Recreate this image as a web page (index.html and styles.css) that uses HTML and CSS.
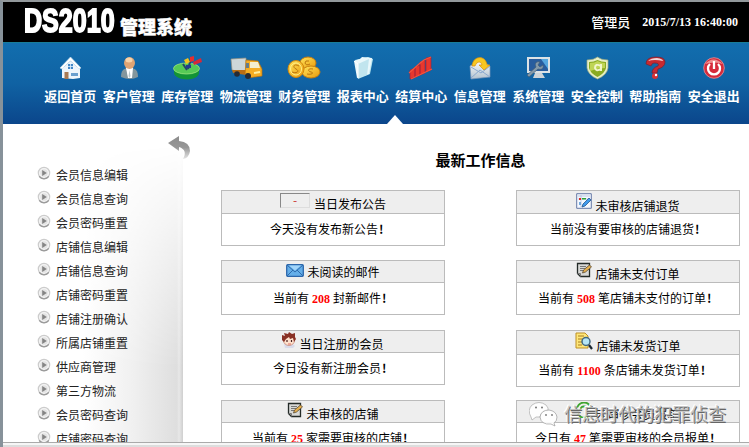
FILE: index.html
```
<!DOCTYPE html>
<html lang="zh-CN">
<head>
<meta charset="utf-8">
<title>DS2010 管理系统</title>
<link rel="stylesheet" href="styles.css">
</head>
<body>
<svg width="0" height="0" class="defs">
  <defs>
    <linearGradient id="gold" x1="0" y1="0" x2="1" y2="1"><stop offset="0" stop-color="#ffe45c"/><stop offset="1" stop-color="#e99a0c"/></linearGradient>
    <linearGradient id="silver" x1="0" y1="0" x2="0" y2="1"><stop offset="0" stop-color="#fff"/><stop offset="1" stop-color="#b4c3cf"/></linearGradient>
    <linearGradient id="arrow" x1="0" y1="0" x2="0" y2="1"><stop offset="0" stop-color="#8c8c8c"/><stop offset=".5" stop-color="#979797"/><stop offset="1" stop-color="#e4e4e4"/></linearGradient>
    <symbol id="play" viewBox="0 0 14 14"><circle cx="7" cy="7" r="5.7" fill="#f4f4f4" stroke="#ccc" stroke-width="1.2"/><path d="M2.2 10.4a6 6 0 0 0 9.6 0" fill="none" stroke="#999" stroke-width="1.3"/><circle cx="7" cy="7" r="3.7" fill="#e3e3e3"/><path d="M5.2 4l4.6 3-4.6 3z" fill="#858585"/></symbol>
    <symbol id="note" viewBox="0 0 16 16"><path d="M1.5 1.5h12v13h-9l-3-3z" fill="#d8d9d6" stroke="#242b28" stroke-width="1.3"/><path d="M1.5 11.5h3v3M4 4.5h6M4 6.5h5M4 8.5h4" fill="none" stroke="#777" stroke-width="1"/><path d="M6.5 11l1-3 6-5 2 2-6 5z" fill="#e4ae4b" stroke="#594a35" stroke-width=".8"/></symbol>
  </defs>
</svg>
<div class="window">
  <header class="top">
    <div class="brand"><span class="brand-code">DS2010</span><span class="brand-name">管理系统</span></div>
    <div class="user"><span class="user-name">管理员</span><span class="clock">2015/7/13 16:40:00</span></div>
  </header>
  <nav class="nav">
    <a class="nav-item"><svg viewBox="0 0 34 24"><path d="M9 11h18v11l-7 1-11-1z" fill="#eef5fb"/><path d="M7 12L17.500 1 28 12l-2 1-8.500-8L9 13z" fill="#fff" stroke="#b9d5e8" stroke-width=".7"/><path d="M9 13l8.500-8L26 13z" fill="#eef5fb"/><path d="M15 8h5v5h-5z" fill="#4388c7"/><path d="M17.500 8v5M15 10.500h5" stroke="#dcefff" stroke-width=".8"/><path d="M11.500 16h4v7h-4z" fill="#a87a53"/><path d="M18 17h7v3h-7z" fill="#6a9fce"/></svg>返回首页</a>
    <a class="nav-item"><svg viewBox="0 0 34 24"><path d="M9 21c0-6 2-9 8.500-9s8.500 3 8.500 9q-8 4-17 0z" fill="#83969d"/><path d="M14 12h7l-1 10h-4z" fill="#fff"/><path d="M17.500 14l1 6-1 2-1-2z" fill="#b9c7cc"/><ellipse cx="17.500" cy="7" rx="5.500" ry="6" fill="#dfa474"/><ellipse cx="17" cy="4" rx="3.500" ry="2.500" fill="#f8d3a8"/></svg>客户管理</a>
    <a class="nav-item"><svg viewBox="0 0 34 24"><path d="M4 13v4c1 8 24 9 25 0v-5z" fill="#129336"/><ellipse cx="16.500" cy="12.500" rx="13" ry="5.500" fill="#56ca56" stroke="#abeb85" stroke-width=".7"/><path d="M17 14L13 8M18 13l3-10" stroke="#25456b" stroke-width="2"/><path d="M14 4l4-2 2 4-4 2z" fill="#f3c31e"/><path d="M20 1l4-1v5l-4 1z" fill="#e52e30"/><path d="M23 6l8-4 1 4-8 3z" fill="#d72938"/><path d="M16 9h5v3h-5z" fill="#243b8d"/></svg>库存管理</a>
    <a class="nav-item"><svg viewBox="0 0 34 24"><path d="M2 3l15-1v15L3 14z" fill="#cdd7d9" stroke="#948f80" stroke-width=".7"/><path d="M3 14h14v5l-13-2z" fill="#b86d16"/><path d="M17 4l12 1 4 8v7l-14 2-3-3z" fill="#f5ad23" stroke="#b67011" stroke-width=".7"/><path d="M21 6h8l2 6H21z" fill="#f5efce"/><path d="M17 7h3v5h-3z" fill="#657c89"/><circle cx="8" cy="18" r="2.800" fill="#272b34"/><circle cx="19" cy="20" r="3" fill="#272b34"/><path d="M25 17l6-1" stroke="#fff0a0" stroke-width="2"/></svg>物流管理</a>
    <a class="nav-item"><svg viewBox="0 0 34 24"><ellipse cx="21" cy="7" rx="8" ry="6" fill="url(#gold)" stroke="#c87d0d"/><ellipse cx="24" cy="16" rx="9" ry="6" fill="url(#gold)" stroke="#c87d0d"/><ellipse cx="9" cy="13" rx="8" ry="8.500" fill="url(#gold)" stroke="#d1860c"/><ellipse cx="9" cy="13" rx="5.500" ry="6" fill="none" stroke="#fff08a"/><path d="M12 10c-5-3-7 1-3 3s1 5-4 3M26 13c-5-1-6 2-2 3s0 3-4 2M22 5q-4-1-4 2 1 3 5 1" fill="none" stroke="#bb760e" stroke-width="1"/></svg>财务管理</a>
    <a class="nav-item"><svg viewBox="0 0 34 24"><path d="M9 4l13-3 5 2-3 15-12 5z" fill="#b8e5ef"/><path d="M8 5l6-2 2-2 10 1-3 16-12 4z" fill="#eaf8fb"/><path d="M12 8l11-5-2 16-9 3z" fill="#c1e5ee"/><path d="M8 5l4 3v14" fill="none" stroke="#fff"/></svg>报表中心</a>
    <a class="nav-item"><svg viewBox="0 0 34 24"><path d="M6 14l5-2v9l-5 2zM11 11l5-2v10l-5 2zM16 6l5-2v13l-5 2zM22 2l5-1v13l-5 2z" fill="#e8372d" stroke="#a2243a" stroke-width=".7"/><path d="M5 17L15 8l5-4 7-3M7 23l21-10" fill="none" stroke="#f2553f" stroke-width="1.100"/></svg>结算中心</a>
    <a class="nav-item"><svg viewBox="0 0 34 24"><path d="M7 10l11-6 9 6v11l-19 2z" fill="url(#silver)" stroke="#7995b9" stroke-width=".7"/><path d="M8 22l9-8 10 7M8 11l10 6 9-7" fill="none" stroke="#8aa9cf"/><path d="M9 10c1-11 14-11 15-1h3l-6 5-5-5h3c-1-4-5-4-7 1z" fill="#f8c721" stroke="#d58e0e" stroke-width=".7"/></svg>信息管理</a>
    <a class="nav-item"><svg viewBox="0 0 34 24"><path d="M6 1h23v16H6z" fill="#dce3e6"/><path d="M8 3h19v12H8z" fill="#285d9e"/><path d="M20 3h7v10z" fill="#55a7df"/><path d="M14 17h7l3 5H12z" fill="#cdd4d8"/><path d="M6 19L15 11c-2-4 1-6 4-5l-2 3 2 2 3-2c1 4-2 5-5 4L8 21z" fill="#849aaa" stroke="#425d75" stroke-width=".7"/></svg>系统管理</a>
    <a class="nav-item"><svg viewBox="0 0 34 24"><path d="M7 4q7 0 10.500-3Q21 4 28 4v8q-1 7-10.500 11Q8 19 7 12z" fill="#e7efc5" stroke="#9eac82" stroke-width=".7"/><path d="M9 6q5 0 8.500-2Q21 6 26 6v6q-1 5-8.500 9Q10 17 9 12z" fill="#8aab22"/><path d="M10 7q5 0 7.500-2Q21 7 25 7v5q-7 0-15 3z" fill="#bfd555"/><path d="M21 8v7M21 10q-6-3-6 2 1 4 6 1" fill="none" stroke="#f1f6cb" stroke-width="2"/></svg>安全控制</a>
    <a class="nav-item"><svg viewBox="0 0 34 24"><path d="M8 8Q8 1 18 1q9 0 9 5 0 5-7 7l-1 4h-5q0-5 6-7 2-3-4-3-2 0-3 3z" fill="#c82a31" stroke="#7b1e2d" stroke-width=".7"/><path d="M10 5q3-3 9-3 6 1 6 3-4-1-8-1-4 0-7 1z" fill="#efd4d7"/><circle cx="17" cy="20" r="3" fill="#d63135"/><circle cx="18" cy="19" r="1.200" fill="#fff"/></svg>帮助指南</a>
    <a class="nav-item"><svg viewBox="0 0 34 24"><circle cx="17" cy="12" r="10.300" fill="#d62b3b" stroke="#eb8f95" stroke-width=".8"/><path d="M8 8q8-9 18 0-8-3-18 0z" fill="#ef8e90"/><path d="M13 8a6 6 0 1 0 8 0M17 5v8" fill="none" stroke="#fff" stroke-width="2.300"/></svg>安全退出</a>
    <i class="pointer"></i>
  </nav>
  <div class="main">
    <aside class="side">
      <svg class="back" viewBox="0 0 23 23"><path d="M0 7L11 0v5q11 1 11 10-1 7-7 8 5-9-4-12v4z" fill="url(#arrow)"/></svg>
      <ul class="menu">
        <li><svg><use href="#play"/></svg>会员信息编辑</li>
        <li><svg><use href="#play"/></svg>会员信息查询</li>
        <li><svg><use href="#play"/></svg>会员密码重置</li>
        <li><svg><use href="#play"/></svg>店铺信息编辑</li>
        <li><svg><use href="#play"/></svg>店铺信息查询</li>
        <li><svg><use href="#play"/></svg>店铺密码重置</li>
        <li><svg><use href="#play"/></svg>店铺注册确认</li>
        <li><svg><use href="#play"/></svg>所属店铺重置</li>
        <li><svg><use href="#play"/></svg>供应商管理</li>
        <li><svg><use href="#play"/></svg>第三方物流</li>
        <li><svg><use href="#play"/></svg>会员密码查询</li>
        <li><svg><use href="#play"/></svg>店铺密码查询</li>
      </ul>
    </aside>
    <section class="content">
      <h1>最新工作信息</h1>
      <div class="cards">
        <article class="card notice">
          <h2><span class="broken">-</span><span>当日发布公告</span></h2>
          <p>今天没有发布新公告<b class="bang">!</b></p>
        </article>
        <article class="card returns">
          <h2><svg width="16" height="16" viewBox="0 0 16 16"><path d="M.7.7h14.600v14.600H.7z" fill="#f4f8ff" stroke="#6679a6"/><path d="M2 3h12M2 6h12M5 2v12" stroke="#a9b9d8" stroke-width=".7"/><path d="M3 5h2v2H3z" fill="#d92a22"/><path d="M6 5h4v1.500H6z" fill="#31a437"/><path d="M3 9h2v3H3z" fill="#73a9da"/><path d="M6 14l1-3 6-6 2 2-6 6z" fill="#409bed" stroke="#24578f" stroke-width=".8"/></svg><span>未审核店铺退货</span></h2>
          <p>当前没有要审核的店铺退货<b class="bang">!</b></p>
        </article>
        <article class="card mail">
          <h2><svg width="18" height="13" viewBox="0 0 18 13"><rect x=".7" y=".7" width="16.600" height="11.600" rx="1" fill="#64aee9" stroke="#2c66ab" stroke-width="1.300"/><path d="M1 1l8 7 8-7M1 12l6-6M17 12l-6-6" fill="none" stroke="#2e6bad"/><path d="M3 1.500h12L9 6.500z" fill="#a2d5fa"/></svg><span>未阅读的邮件</span></h2>
          <p>当前有<em>208</em>封新邮件<b class="bang">!</b></p>
        </article>
        <article class="card unpaid">
          <h2><svg width="16" height="16"><use href="#note"/></svg><span>店铺未支付订单</span></h2>
          <p>当前有<em>508</em>笔店铺未支付的订单<b class="bang">!</b></p>
        </article>
        <article class="card members">
          <h2><svg width="14" height="16" viewBox="0 0 14 16"><path d="M2 12l3-1h5l3 3-2 2H3z" fill="#d9dbea"/><ellipse cx="7" cy="8.500" rx="5.500" ry="5" fill="#ffe2cd" stroke="#ba6e59" stroke-width=".6"/><path d="M0 8V3l3 1-1-3 4 1 1-2 3 2 3-1v4l1 2-2 3-1-4-3 1-1-2-3 2-2 3z" fill="#893125"/><path d="M5 8v2M9.500 8v2" stroke="#482020" stroke-width="1.200"/><path d="M6 12h3" stroke="#d5504d" stroke-width=".8"/></svg><span>当日注册的会员</span></h2>
          <p>今日没有新注册会员<b class="bang">!</b></p>
        </article>
        <article class="card unshipped">
          <h2><svg width="18" height="18" viewBox="0 0 18 18"><path d="M1 1h9l3 3v12H1z" fill="#ffe778" stroke="#bd8f24"/><path d="M3 4h6M3 7h5M3 10h4M3 13h4" stroke="#a77c22"/><circle cx="11" cy="9.500" r="4" fill="#b5e5f5" stroke="#426981" stroke-width="1.500"/><path d="M14 13l3 4" stroke="#1c2832" stroke-width="2.200"/></svg><span>店铺未发货订单</span></h2>
          <p>当前有<em>1100</em>条店铺未发货订单<b class="bang">!</b></p>
        </article>
        <article class="card shops">
          <h2><svg width="16" height="16"><use href="#note"/></svg><span>未审核的店铺</span></h2>
          <p>当前有<em>25</em>家需要审核的店铺<b class="bang">!</b></p>
        </article>
        <article class="card reports">
          <h2><svg width="16" height="16" viewBox="0 0 16 16"><path d="M1 8a7 7 0 0 1 14-1M4 9a4 4 0 0 1 8-1M1 10a7 7 0 0 0 13 2" fill="none" stroke="#3fa52f" stroke-width="1.800"/></svg><span>未审核会员报单</span></h2>
          <p>今日有<em>47</em>笔需要审核的会员报单<b class="bang">!</b></p>
        </article>
      </div>
    </section>
  </div>
  <footer class="edge"></footer>
</div>
<div class="watermark">
  <svg viewBox="0 0 30 26"><path d="M2 16Q-2 9 3 4 10-1 17 4q3 3 2 6-7 0-8 6l-4 0-4 3z" fill="#fff" fill-opacity=".9" stroke="#aaa" stroke-width=".7"/><path d="M11 16q1-7 9-7 7 1 8 7 0 4-3 6l1 3-4-2q-10 1-11-7z" fill="#fff" fill-opacity=".9" stroke="#999" stroke-width=".7"/><g fill="#777"><circle cx="7" cy="6.500" r="1"/><circle cx="13" cy="6.500" r="1"/><circle cx="17" cy="14" r=".9"/><circle cx="23" cy="14" r=".9"/></g></svg>
  <span>信息时代的犯罪侦查</span>
</div>
</body>
</html>
```
FILE: styles.css
```
* { box-sizing: border-box; }
body {
  margin: 0;
  width: 749px;
  height: 447px;
  overflow: hidden;
  position: relative;
  background: #fff;
  color: #000;
  font: 12px/16px "Noto Sans CJK SC", sans-serif;
}
.defs { display: block; position: absolute; }
.window {
  display: flex;
  flex-direction: column;
  height: 447px;
  border-top: 2px solid #92989b;
  border-left: 3px solid #87929a;
}
.top {
  flex: none;
  height: 40px;
  display: flex;
  justify-content: space-between;
  background: #000;
  color: #fff;
}
.brand { display: flex; height: 40px; padding-left: 21px; }
.brand-code {
  width: 96px;
  height: 40px;
  font: bold 33px/37px "Liberation Sans", sans-serif;
  transform: scaleX(.76);
  transform-origin: 0 0;
  -webkit-text-stroke: 1.8px #fff;
}
.brand-name { padding-top: 12px; font-size: 18px; font-weight: 900; line-height: 25px; -webkit-text-stroke: .5px #fff; }
.user { display: flex; gap: 12px; height: 40px; padding-right: 11px; line-height: 40px; }
.user-name { font-size: 13px; font-weight: 500; }
.clock { font: bold 12px/40px "Liberation Serif", serif; }
.nav {
  position: relative;
  flex: 0 0 82px;
  display: grid;
  grid-template-columns: repeat(12, 58.5px);
  padding-left: 38px;
  border-top: 1px solid #187d99;
  background: linear-gradient(#126eae, #1062a3 50%, #0b468b);
  color: #fff;
  overflow: hidden;
}
.nav-item {
  display: flex;
  flex-direction: column;
  align-items: center;
  padding-top: 13px;
  gap: 7px;
  font-size: 13px;
  font-weight: 700;
  line-height: 17px;
  white-space: nowrap;
}
.nav-item svg { width: 34px; height: 24px; }
.pointer {
  position: absolute;
  left: 384px;
  bottom: 0;
  border: 8px solid transparent;
  border-top: 0;
  border-bottom: 9px solid #fff;
}
.main { flex: none; height: 318px; display: flex; overflow: hidden; }
.side { position: relative; flex: 0 0 180px; height: 318px; }
.side::before {
  content: "";
  position: absolute;
  inset: 20px 0 0 80px;
  background: linear-gradient(90deg, #fff, #f0f0f0 50%, #dedede 94%, #e8e8e8 96%, #cfcfcf);
  -webkit-mask-image: linear-gradient(transparent, #000 75%);
  mask-image: linear-gradient(transparent, #000 75%);
}
.back { position: absolute; left: 165px; top: 12px; width: 23px; height: 23px; }
.menu { position: relative; margin: 0; padding: 39px 0 0 34px; list-style: none; }
.menu li { display: flex; gap: 5px; height: 24px; line-height: 24px; color: #222; }
.menu svg { width: 14px; height: 14px; margin-top: 3px; }
.content { flex: 1; padding: 26px 6px 0 38px; }
h1 { margin: 0 0 20px; padding-right: 3px; font-size: 15px; line-height: 20px; text-align: center; font-weight: 700; }
.cards {
  display: grid;
  grid-template-columns: 224px 224px;
  grid-auto-rows: 70px;
  column-gap: 71px;
  align-items: start;
}
.card { height: 55px; border: 1px solid #bbb; background: #fff; }
.card h2 {
  display: flex;
  justify-content: center;
  gap: 3px;
  height: 22px;
  margin: 0;
  border-bottom: 1px solid #bbb;
  background: #eee;
  font-size: 12px;
  font-weight: 400;
  line-height: 22px;
}
.card h2 span { padding-top: 2px; }
.card h2 svg { flex: none; margin-top: 1px; }
.card p { margin: 0; line-height: 30px; text-align: center; }
.card em { margin: 0 3px; color: #f00; font: bold 12px "Liberation Serif", serif; }
.bang { display: inline-block; width: 12px; padding-left: 1px; text-align: left; }
.card h2 .broken {
  width: 30px;
  height: 15px;
  margin: 2px 1px 0 0;
  padding: 0;
  border: 1px solid #ddd;
  border-top-color: #888;
  border-left-color: #888;
  color: #c33;
  line-height: 11px;
  text-align: center;
}
.notice, .returns { height: 56px; }
.notice h2, .returns h2 { height: 23px; }
.notice p { padding-right: 6px; }
.returns h2 svg { margin-top: 2px; }
.returns h2 span { padding-top: 4px; }
.mail h2 svg { margin-top: 3px; }
.mail h2 span { padding-top: 0; }
.unshipped { height: 57px; }
.unshipped h2 { height: 24px; }
.unshipped h2 span { padding-top: 4px; }
.unshipped p { padding-right: 6px; }
.edge { flex: 0 0 5px; border-top: 1px solid #aaa; border-bottom: 2px solid #ddd; background: #f6f6f6; }
.watermark {
  position: absolute;
  left: 529px;
  top: 401px;
  display: flex;
  gap: 5px;
  color: rgba(190, 190, 190, .85);
  font-size: 18px;
  line-height: 25px;
  white-space: nowrap;
  text-shadow: 1px 1px 0 #666, -1px -1px 0 #fff;
}
.watermark svg { width: 30px; height: 26px; }
```
